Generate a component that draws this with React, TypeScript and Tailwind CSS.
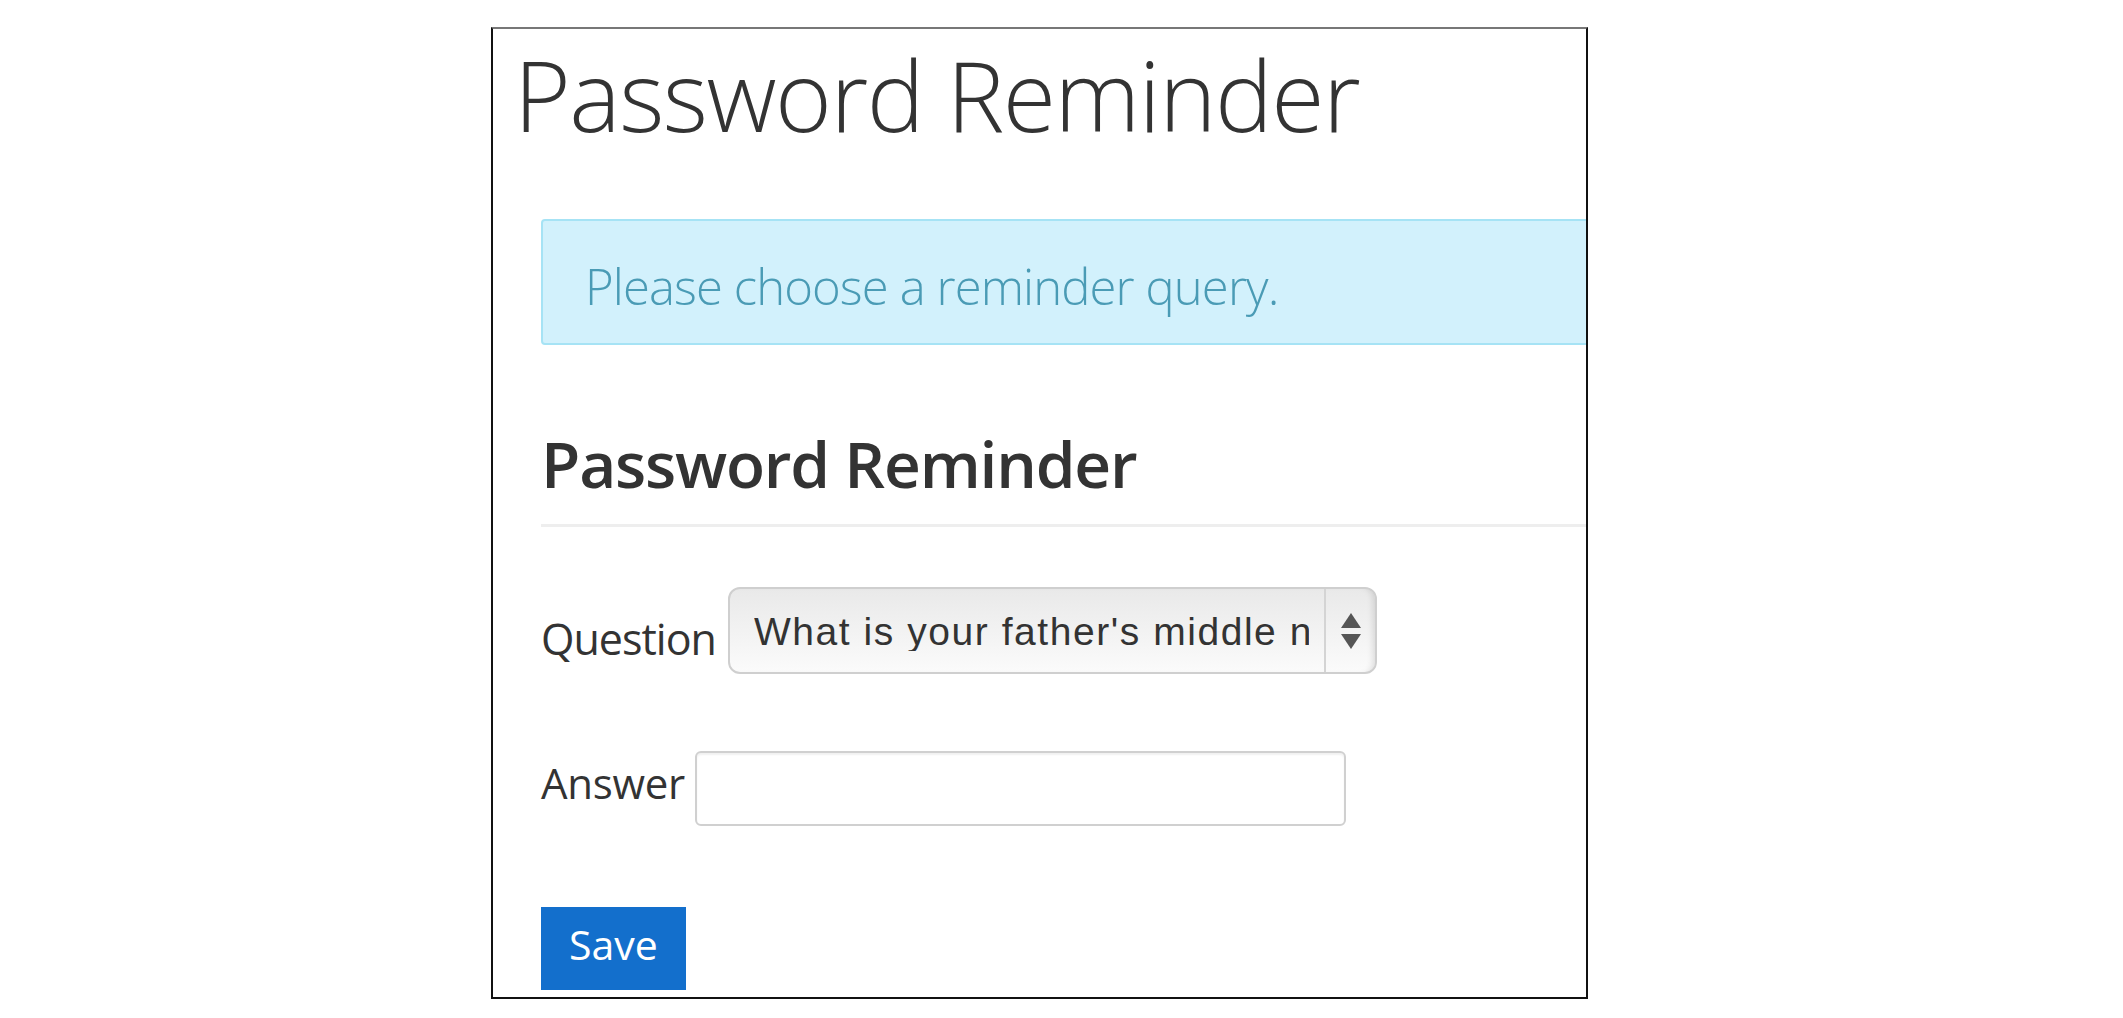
const App = () => {
    return (
        <div className="min-h-screen bg-white pl-[491px] pt-[27px]" style={{ fontFamily: '"Open Sans", sans-serif' }}>
            <div className="w-[1097px] h-[972px] overflow-hidden border-2 border-[#111] border-t-[#777] bg-white">
                <h1 className="pl-[21px] pt-[17px] text-[97px] leading-[97px] font-light tracking-[-1.5px] text-[#333] whitespace-nowrap">
                    Password Reminder
                </h1>

                <div className="pl-[48px]">
                    {/* info alert, runs past the right edge */}
                    <div className="mt-[76px] -mr-[30px] h-[126px] border-2 border-[#a6e3f5] rounded-[4px] bg-[#d2f1fc] pl-[42px] pt-[41px]">
                        <p className="text-[49px] leading-[49px] font-light tracking-[-0.9px] text-[#4a9bb5]">Please choose a reminder query.</p>
                    </div>

                    <h2 className="mt-[87px] text-[64px] leading-[64px] font-semibold tracking-[-1.2px] text-[#333] whitespace-nowrap">
                        Password Reminder
                    </h2>
                    <div className="mt-[28px] h-[3px] bg-[#eeeeee]"></div>

                    <div className="mt-[60px] flex items-start">
                        <label className="mt-[30px] text-[43px] leading-[43px] tracking-[-1px] text-[#333] w-[187px]">Question</label>
                        <div className="flex w-[649px] h-[87px] rounded-[12px] border-2 border-[#cfcfcf] bg-gradient-to-b from-[#e9e9e9] to-[#fbfbfb] shadow-[inset_-6px_0_6px_-4px_rgba(0,0,0,0.12)]">
                            <div className="w-[594px] overflow-hidden pl-[24px] pt-[23px]">
                                <span className="block w-[555px] overflow-hidden whitespace-nowrap text-[39px] leading-[39px] tracking-[1.55px] text-[#333]" style={{ fontFamily: '"Liberation Sans", Arial, sans-serif' }}>
                                    What is your father's middle name?
                                </span>
                            </div>
                            <div className="flex flex-1 flex-col items-center justify-center gap-[6px] border-l-2 border-[#d4d4d4]">
                                <svg width="20" height="15" viewBox="0 0 20 15"><polygon points="10,0 20,15 0,15" fill="#555" /></svg>
                                <svg width="20" height="15" viewBox="0 0 20 15"><polygon points="0,0 20,0 10,15" fill="#555" /></svg>
                            </div>
                        </div>
                    </div>

                    <div className="mt-[77px] flex items-start">
                        <label className="mt-[11px] text-[42px] leading-[42px] tracking-[-0.3px] text-[#333] w-[154px]">Answer</label>
                        <input type="text" className="w-[651px] h-[75px] rounded-[6px] border-2 border-[#d0d0d0] bg-white shadow-[inset_0_2px_2px_rgba(0,0,0,0.06)] outline-none px-3 text-[36px]" />
                    </div>

                    <button className="mt-[81px] block w-[145px] h-[83px] bg-[#136fcc] text-white text-[41px] leading-[41px] pb-[8px] cursor-pointer">
                        Save
                    </button>
                </div>
            </div>
        </div>
    )
}

export default App
